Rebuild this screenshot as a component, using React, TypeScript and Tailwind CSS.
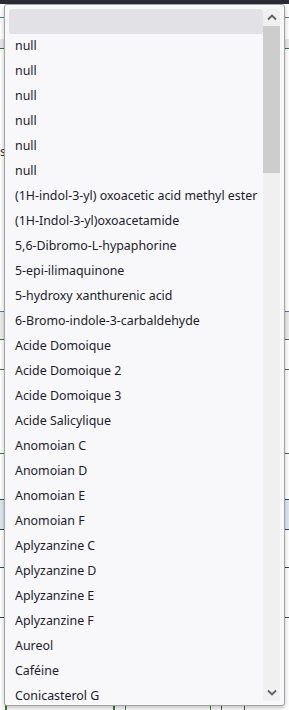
import React from "react";

const items: string[] = [
  "",
  "null",
  "null",
  "null",
  "null",
  "null",
  "null",
  "(1H-indol-3-yl) oxoacetic acid methyl ester",
  "(1H-Indol-3-yl)oxoacetamide",
  "5,6-Dibromo-L-hypaphorine",
  "5-epi-ilimaquinone",
  "5-hydroxy xanthurenic acid",
  "6-Bromo-indole-3-carbaldehyde",
  "Acide Domoique",
  "Acide Domoique 2",
  "Acide Domoique 3",
  "Acide Salicylique",
  "Anomoian C",
  "Anomoian D",
  "Anomoian E",
  "Anomoian F",
  "Aplyzanzine C",
  "Aplyzanzine D",
  "Aplyzanzine E",
  "Aplyzanzine F",
  "Aureol",
  "Caféine",
  "Conicasterol G",
];

function Chevron({ up }: { up?: boolean }) {
  return (
    <svg width="10" height="7" viewBox="0 0 10 7" className={up ? "" : "rotate-180"}>
      <path d="M1 5.5 L5 1.5 L9 5.5" fill="none" stroke="#606060" strokeWidth="1.8" />
    </svg>
  );
}

export default function App() {
  return (
    <div className="relative w-[289px] h-[710px] overflow-hidden bg-white font-['Noto_Sans',sans-serif]">
      {/* page behind the open select */}
      <div className="h-[4px] bg-[#2b2b36]" />
      <div className="flex flex-col">
        <div className="h-[13px]" />
        <div className="h-[1px] bg-[#4a7fb0]" />
        <div className="h-[21px]" />
        <div className="h-[10px] bg-[#e8e8e8] border-b border-[#2e7d32]" />
        <div className="h-[96px]" />
        <div className="text-[12px] leading-[14px] text-[#333]">s</div>
        <div className="h-[152px]" />
        <div className="h-[1px] bg-[#4a7fb0]" />
        <div className="h-[28px] bg-[#ececec] border-b border-[#2e7d32]" />
        <div className="h-[30px] border-b border-[#2e7d32]" />
        <div className="h-[84px] border-b border-[#2e7d32]" />
        <div className="h-[46px] border-b border-[#1c4e6e]" />
        <div className="h-[30px] bg-[#dfe7ee] border-b border-[#1c4e6e]" />
        <div className="h-[38px] border-b border-[#1c4e6e]" />
        <div className="h-[50px] border-b border-[#1c4e6e]" />
      </div>
      <div className="absolute left-[5px] bottom-0 flex gap-[10px]">
        <div className="w-[110px] h-[6px] border-t-2 border-x-2 border-[#2e7d32]" />
        <div className="w-[86px] h-[6px] border-t border-x border-[#2e7d32]" />
        <div className="w-[24px] h-[6px] border-t border-x border-[#555]" />
      </div>

      {/* dropdown list */}
      <div className="absolute left-[4px] top-[4px] w-[281px] h-[702px] rounded-[3px] border border-[#a3a3a3] bg-[#f8f8fb] shadow-[0_2px_4px_rgba(0,0,0,0.25)] pt-[4px] pl-[4px] pr-[4px] flex overflow-hidden">
        <div className="flex-1 overflow-hidden text-[12.4px] text-[#1b1b2b]">
          {items.map((t, i) => (
            <div
              key={i}
              className={`h-[25px] flex items-center pl-[6px] whitespace-nowrap ${i === 0 ? "bg-[#e1e1e6] rounded-[3px]" : ""}`}
            >
              {t}
            </div>
          ))}
        </div>
        <div className="w-[17px] h-[692px] bg-[#f0f0f0] flex flex-col">
          <div className="h-[17px] flex items-center justify-center">
            <Chevron up />
          </div>
          <div className="h-[147px] bg-[#cdcdcd]" />
          <div className="flex-1" />
          <div className="h-[17px] flex items-center justify-center">
            <Chevron />
          </div>
        </div>
      </div>
    </div>
  );
}
